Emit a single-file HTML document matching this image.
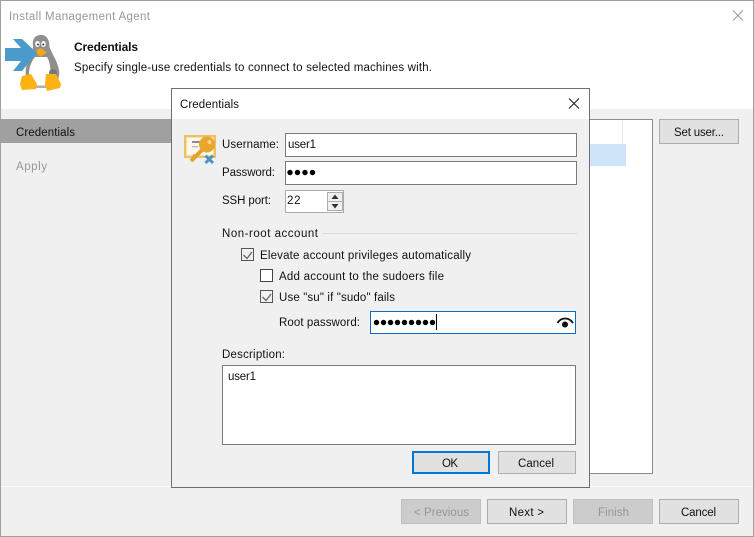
<!DOCTYPE html>
<html lang="en">
<head>
<meta charset="utf-8">
<title>Install Management Agent</title>
<style>
html,body{margin:0;padding:0;background:#fff}
svg{display:block;position:absolute;left:0;top:0}
text{font-family:"Liberation Sans",sans-serif;font-size:11.5px;fill:#111}
.g{fill:#6d6d6d}
.d{fill:#979797}
</style>
</head>
<body>
<svg width="754" height="537" viewBox="0 0 754 537" xmlns="http://www.w3.org/2000/svg">
<!-- window -->
<rect x="0" y="0" width="754" height="537" fill="#a0a0a0"/>
<rect x="1" y="1" width="752" height="535" fill="#f0f0f0"/>
<rect x="1" y="1" width="752" height="108" fill="#fff"/>
<text x="9" y="20" class="d" textLength="141" lengthAdjust="spacing">Install Management Agent</text>
<path d="M733 10.500L743 20.500M743 10.500L733 20.500" stroke="#9a9a9a" stroke-width="1" fill="none"/>

<!-- penguin -->
<path d="M33 46C32 39 35 35 41 35C47 35 49.500 40 49.500 47C52 54 57 60 59 70C60 76 58 82 54 85L30 87C26 81 25 74 26 68C28 61 33 56 33 46Z" fill="#8f8f8f"/>
<path d="M35 57C31 62 29 68 29 74C30 82 34 87 40 88C46 88 50 82 50.500 72C50.500 66 49 60 47 57Z" fill="#fff"/>
<circle cx="53" cy="73" r="4" fill="#777"/>
<rect x="36" y="85.500" width="11" height="2.500" fill="#b0b0b0"/>
<ellipse cx="37.500" cy="44" rx="2.300" ry="3" fill="#fff"/><ellipse cx="43.500" cy="44" rx="2.300" ry="3" fill="#fff"/>
<circle cx="38" cy="44.500" r="1" fill="#333"/><circle cx="43.300" cy="44.500" r="1" fill="#333"/>
<path d="M36 50L41 48L47 52.500L41 56.500L38 55Z" fill="#f0a71c"/>
<path d="M22 76L31 74L37 84L36 89L22 90L20 84Z" fill="#fbb314"/>
<path d="M46 74L56 74L61 84L60 88L47 91L45 84Z" fill="#fbb314"/>
<!-- arrow -->
<path d="M13 39H22L37 53L22 71H13L21 61H5V48H21Z" fill="#4a9bcb"/>

<text x="74" y="51" font-weight="bold" style="font-size:12px" textLength="64" lengthAdjust="spacing">Credentials</text>
<text x="74" y="71" textLength="358" lengthAdjust="spacing">Specify single-use credentials to connect to selected machines with.</text>

<!-- sidebar -->
<rect x="1" y="119" width="175" height="24" fill="#a0a0a0"/>
<text x="16" y="136" textLength="59" lengthAdjust="spacing">Credentials</text>
<text x="16" y="170" class="d" textLength="31" lengthAdjust="spacing">Apply</text>

<!-- background list -->
<rect x="560.500" y="119.500" width="92" height="354" fill="#fff" stroke="#8c8c8c"/>
<rect x="622" y="120" width="1" height="24" fill="#e8e8e8"/>
<rect x="585" y="144" width="41" height="22" fill="#cde4f9"/>

<!-- Set user -->
<rect x="659.500" y="119.500" width="79" height="24" fill="#e1e1e1" stroke="#adadad"/>
<text x="674" y="136" textLength="50" lengthAdjust="spacing">Set user...</text>

<!-- footer -->
<rect x="1" y="486" width="752" height="1" fill="#fbfbfb"/>
<rect x="401.500" y="499.500" width="79" height="24" fill="#cccccc" stroke="#bfbfbf"/>
<text x="414" y="516" class="d" textLength="55" lengthAdjust="spacing">&lt; Previous</text>
<rect x="487.500" y="499.500" width="79" height="24" fill="#e1e1e1" stroke="#adadad"/>
<text x="509" y="516" textLength="35" lengthAdjust="spacing">Next &gt;</text>
<rect x="573.500" y="499.500" width="79" height="24" fill="#cccccc" stroke="#bfbfbf"/>
<text x="598" y="516" class="d" textLength="31" lengthAdjust="spacing">Finish</text>
<rect x="659.500" y="499.500" width="79" height="24" fill="#e1e1e1" stroke="#adadad"/>
<text x="681" y="516" textLength="35" lengthAdjust="spacing">Cancel</text>

<!-- dialog -->
<rect x="171.500" y="88.500" width="418" height="399" fill="#f0f0f0" stroke="#6f6f6f"/>
<rect x="172" y="89" width="417" height="30" fill="#fff"/>
<text x="180" y="108" textLength="59" lengthAdjust="spacing">Credentials</text>
<path d="M569 98.500L579 108.500M579 98.500L569 108.500" stroke="#222" stroke-width="1.100" fill="none"/>

<!-- credential icon -->
<rect x="185.200" y="136.200" width="29.600" height="20.600" fill="#fdf7ea" stroke="#eec062" stroke-width="2.400"/>
<rect x="192" y="141" width="10" height="2" fill="#8c8c8c"/>
<rect x="192" y="146" width="6" height="1.500" fill="#c0c0c0"/>
<path d="M191 161L203 149" stroke="#e2a02e" stroke-width="3.800" fill="none"/>
<path d="M193 154.500L196 157.500" stroke="#e2a02e" stroke-width="2" fill="none"/>
<circle cx="207" cy="144.500" r="8" fill="#e8a72c"/>
<circle cx="209.500" cy="142" r="2" fill="#f6d690"/>
<path d="M205.500 155.500L213 163M213 155.500L205.500 163" stroke="#4a93c8" stroke-width="3" fill="none"/>

<!-- labels + fields -->
<text x="222" y="148" textLength="57" lengthAdjust="spacing">Username:</text>
<rect x="285.500" y="133.500" width="291" height="23" fill="#fff" stroke="#7a7a7a"/>
<text x="288" y="148" textLength="28" lengthAdjust="spacing">user1</text>

<text x="222" y="176" textLength="53" lengthAdjust="spacing">Password:</text>
<rect x="285.500" y="161.500" width="291" height="23" fill="#fff" stroke="#7a7a7a"/>
<g fill="#000"><circle cx="290" cy="172.500" r="2.700"/><circle cx="297.500" cy="172.500" r="2.700"/><circle cx="305" cy="172.500" r="2.700"/><circle cx="312.500" cy="172.500" r="2.700"/></g>

<text x="222" y="204" textLength="49" lengthAdjust="spacing">SSH port:</text>
<rect x="285.500" y="190.500" width="58" height="22" fill="#fff" stroke="#ababab"/>
<text x="287" y="204" textLength="13.500" lengthAdjust="spacing">22</text>
<rect x="327.500" y="192.500" width="15" height="9" fill="#f0f0f0" stroke="#adadad"/>
<rect x="327.500" y="201.500" width="15" height="9" fill="#f0f0f0" stroke="#adadad"/>
<path d="M335 194.500L338.500 199H331.500Z" fill="#333"/>
<path d="M335 208.500L338.500 204H331.500Z" fill="#333"/>

<text x="222" y="237" textLength="96" lengthAdjust="spacing">Non-root account</text>
<rect x="322" y="233" width="255" height="1" fill="#dcdcdc"/>

<rect x="241.500" y="248.500" width="12" height="12" fill="#f0f0f0" stroke="#555"/>
<path d="M243.500 255L247 258.500L252 252" stroke="#666" stroke-width="1.300" fill="none"/>
<text x="260" y="259" textLength="211" lengthAdjust="spacing">Elevate account privileges automatically</text>

<rect x="260.500" y="269.500" width="12" height="12" fill="#fff" stroke="#444"/>
<text x="279" y="280" textLength="165" lengthAdjust="spacing">Add account to the sudoers file</text>

<rect x="260.500" y="290.500" width="12" height="12" fill="#f0f0f0" stroke="#555"/>
<path d="M262.500 297L266 300.500L271 294" stroke="#666" stroke-width="1.300" fill="none"/>
<text x="279" y="301" textLength="116" lengthAdjust="spacing">Use "su" if "sudo" fails</text>

<text x="279" y="326" textLength="81" lengthAdjust="spacing">Root password:</text>
<rect x="370.500" y="311.500" width="205" height="22" fill="#fff" stroke="#0a6cc0"/>
<g fill="#000"><circle cx="376.500" cy="322.500" r="2.700"/><circle cx="383.500" cy="322.500" r="2.700"/><circle cx="390.500" cy="322.500" r="2.700"/><circle cx="397.500" cy="322.500" r="2.700"/><circle cx="404.500" cy="322.500" r="2.700"/><circle cx="411.500" cy="322.500" r="2.700"/><circle cx="418.500" cy="322.500" r="2.700"/><circle cx="425.500" cy="322.500" r="2.700"/><circle cx="432.500" cy="322.500" r="2.700"/></g>
<rect x="436" y="314" width="1" height="16" fill="#000"/>
<path d="M557.500 323C561 317 569 317 573 323" stroke="#111" stroke-width="1.800" fill="none"/>
<circle cx="565" cy="324.500" r="3" fill="#111"/>

<text x="222" y="358" textLength="63" lengthAdjust="spacing">Description:</text>
<rect x="222.500" y="365.500" width="353" height="79" fill="#fff" stroke="#7a7a7a"/>
<text x="228" y="380" textLength="28" lengthAdjust="spacing">user1</text>

<rect x="413" y="452" width="76" height="21" fill="#e1e1e1" stroke="#0078d7" stroke-width="2"/>
<text x="442" y="467" textLength="16" lengthAdjust="spacing">OK</text>
<rect x="498.500" y="451.500" width="77" height="22" fill="#e1e1e1" stroke="#adadad"/>
<text x="518" y="467" textLength="36" lengthAdjust="spacing">Cancel</text>
</svg>
</body>
</html>
